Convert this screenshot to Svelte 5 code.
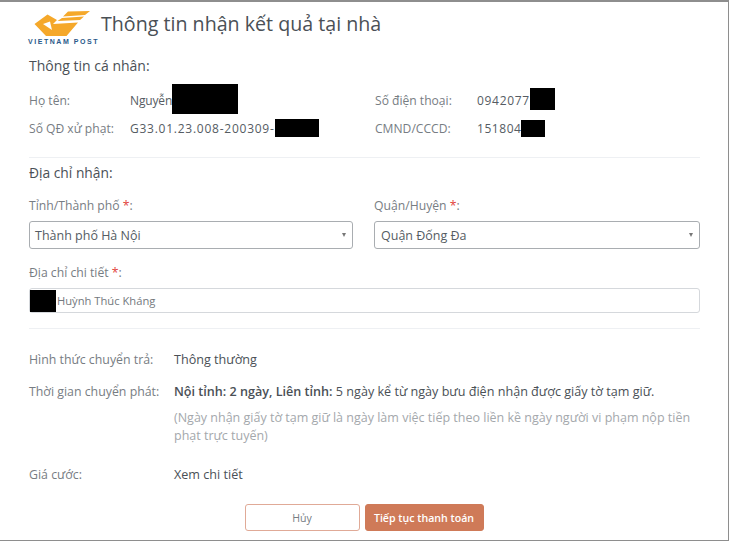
<script>
  const rows = [
    { label: 'Họ tên:', value: 'Nguyễn', cls: 'tight', hide: 66, tall: 30, label2: 'Số điện thoại:', value2: '0942077', cls2: 'num', hide2: 25, tall2: 22, up: true },
    { label: 'Số QĐ xử phạt:', value: 'G33.01.23.008-200309-', cls: 'wide', hide: 44, tall: 18, label2: 'CMND/CCCD:', value2: '151804', cls2: 'num2', hide2: 24, tall2: 17, up: false }
  ];
</script>

<div class="page">
  <header class="head">
    <div class="logo">
      <svg width="58" height="27" viewBox="34 10 58 27">
        <path d="M34.5 24 L47.5 14.5 L57 20 L53 24 L78 22.5 L66.5 36 L46 36 Z" fill="#f5a82a"/>
        <path d="M43 24 L50 21.5 L52 30 Z" fill="#fff"/>
        <path d="M68 11.5 L90 11 L85 15 L63 16.5 Z M62 18 L84 16.5 L80 20 L57.5 21 Z" fill="#f5a82a"/>
      </svg>
      <span class="logotext">VIETNAM POST</span>
    </div>
    <h1>Thông tin nhận kết quả tại nhà</h1>
  </header>

  <h2 class="personal">Thông tin cá nhân:</h2>
  <div class="rows">
    {#each rows as r}
      <div class="row" class:up={r.up}>
        <span class="lab">{r.label}</span>
        <span class="val"><span class={r.cls}>{r.value}</span><i class="mask" style="width:{r.hide}px;height:{r.tall}px"></i></span>
        <span class="lab">{r.label2}</span>
        <span class="val"><span class={r.cls2}>{r.value2}</span><i class="mask" style="width:{r.hide2}px;height:{r.tall2}px"></i></span>
      </div>
    {/each}
  </div>
  <hr class="rule first" />

  <h2 class="addr">Địa chỉ nhận:</h2>
  <div class="fields">
    <div class="field">
      <span class="flabel">Tỉnh/Thành phố <b>*</b>:</span>
      <div class="select">Thành phố Hà Nội<span class="caret"></span></div>
    </div>
    <div class="field">
      <span class="flabel">Quận/Huyện <b>*</b>:</span>
      <div class="select second-select">Quận Đống Đa<span class="caret"></span></div>
    </div>
  </div>
  <span class="flabel detail">Địa chỉ chi tiết <b>*</b>:</span>
  <div class="input"><i class="mask inputmask"></i>Huỳnh Thúc Kháng</div>
  <hr class="rule second" />

  <div class="info one"><span class="ilab">Hình thức chuyển trả:</span><span class="ival">Thông thường</span></div>
  <div class="info two">
    <span class="ilab">Thời gian chuyển phát:</span>
    <div class="ival">
      <p><strong>Nội tỉnh: 2 ngày, Liên tỉnh:</strong> 5 ngày kể từ ngày bưu điện nhận được giấy tờ tạm giữ.</p>
      <p class="note">(Ngày nhận giấy tờ tạm giữ là ngày làm việc tiếp theo liền kề ngày người vi phạm nộp tiền phạt trực tuyến)</p>
    </div>
  </div>
  <div class="info three"><span class="ilab">Giá cước:</span><span class="ival">Xem chi tiết</span></div>

  <div class="actions">
    <button class="cancel">Hủy</button>
    <button class="next">Tiếp tục thanh toán</button>
  </div>
</div>

<style>
  :global(body) { margin: 0; background: #fff; }
  .page {
    box-sizing: border-box; width: 729px; height: 541px; overflow: hidden;
    border-top: 2px solid #8e8e8e; border-right: 1px solid #8e8e8e; border-bottom: 1px solid #8e8e8e;
    padding: 0 29px;
    font-family: "Open Sans", "Noto Sans", sans-serif; color: #555c63; font-size: 12px;
  }
  .head { display: flex; align-items: flex-start; height: 44px; padding-top: 8px; margin-left: -1px; box-sizing: content-box; }
  .logo { width: 73px; display: flex; flex-direction: column; align-items: flex-start; flex: none; }
  .logo svg { display: block; margin-left: 6px; }
  .logotext { font: 700 7px/6px "Liberation Sans", sans-serif; color: #2a5a8a; letter-spacing: 1.55px; margin-top: 2px; white-space: nowrap; }
  h1 { margin: 0; font-size: 19.65px; font-weight: 400; line-height: 28px; color: #4a5056; white-space: nowrap; }
  h2 { margin: 0; font-weight: 400; color: #4a5056; line-height: 18px; }
  .personal { margin-top: 3px; font-size: 14px; }
  .rows { margin-top: 11px; }
  .row { display: grid; grid-template-columns: 101px 245px 102px 1fr; height: 28px; align-items: center; }
  .lab { color: #777d83; font-size: 12.1px; }
  .val { color: #555c63; display: flex; align-items: center; height: 18px; }
  .up .mask { margin-bottom: 2px; }
  .tight { letter-spacing: -.15px; }
  .wide { letter-spacing: .75px; }
  .num { letter-spacing: .7px; }
  .num2 { letter-spacing: .55px; }
  .mask { display: block; background: #000; flex: none; }
  hr { border: 0; border-top: 1px solid #eef0f3; margin: 0; }
  .rule { width: 671px; }
  .first { margin-top: 15px; }
  .addr { margin-top: 6px; font-size: 13.8px; }
  .fields { display: grid; grid-template-columns: 324px 326px; column-gap: 21px; margin-top: 16px; }
  .flabel { display: block; color: #777d83; line-height: 16px; font-size: 12.2px; }
  .flabel b { color: #e2413b; font-weight: 400; }
  .select {
    box-sizing: border-box; height: 28px; margin-top: 7px; border: 1px solid #a9adb1; border-radius: 3px;
    display: flex; justify-content: space-between; align-items: center; padding: 0 6px 0 5px; color: #555c63; font-size: 12.5px;
  }
  .second-select { padding-left: 6px; }
  .caret { width: 0; height: 0; border-left: 2.5px solid transparent; border-right: 2.5px solid transparent; border-top: 4px solid #777; }
  .detail { margin-top: 16px; }
  .input {
    box-sizing: border-box; height: 25px; width: 671px; margin-top: 7px; border: 1px solid #d5d8dc; border-radius: 3px;
    display: flex; align-items: center; padding-left: 0; font-size: 11.2px; color: #74797e;
  }
  .inputmask { width: 26px; height: 22px; margin-right: 1px; }
  .second { margin-top: 15px; }
  .info { display: grid; grid-template-columns: 145px 1fr; }
  .ilab { color: #777d83; line-height: 18px; font-size: 12.35px; }
  .ival { color: #4a5056; line-height: 18px; font-size: 12.6px; }
  .ival p { margin: 0; }
  .one { margin-top: 22px; }
  .two { margin-top: 14px; }
  .note { color: #a4a8ac; margin-top: 8px !important; font-size: 12.5px; }
  .three { margin-top: 21px; }
  strong { font-weight: 600; }
  .actions { display: flex; justify-content: center; gap: 5px; margin-top: 20px; }
  button { box-sizing: border-box; height: 27px; border-radius: 3px; font-family: inherit; font-size: 10.6px; }
  .cancel { width: 115px; background: #fff; border: 1px solid #e0aa97; color: #777d83; }
  .next { width: 119px; background: #cf7a58; border: 1px solid #cf7a58; color: #fff; font-weight: 600; }
</style>
